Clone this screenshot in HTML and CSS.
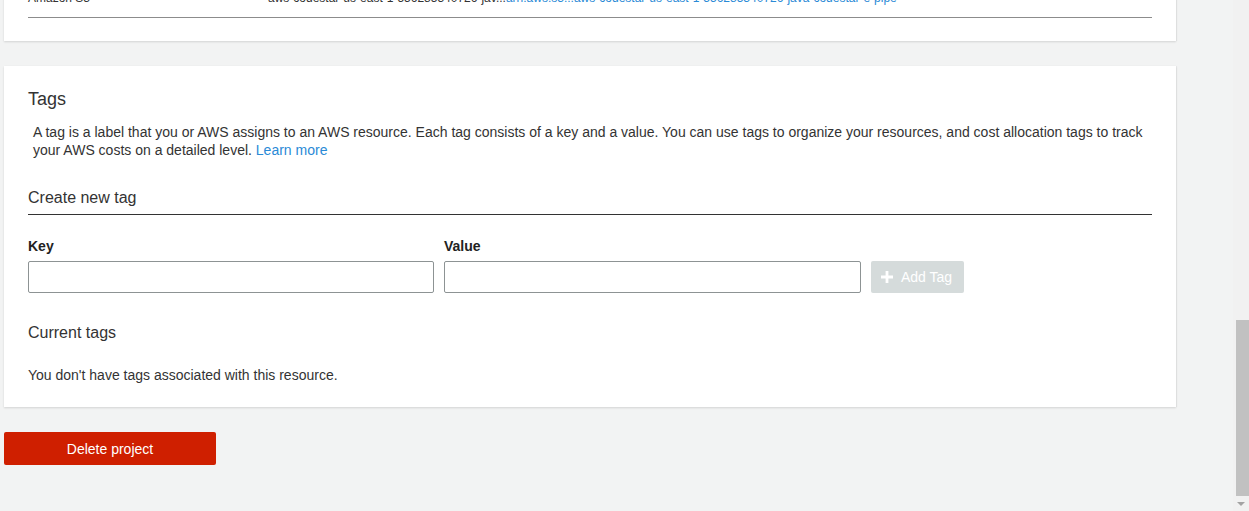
FILE: index.html
```html
<!DOCTYPE html>
<html lang="en">
<head>
<meta charset="utf-8">
<title>Project settings</title>
<link rel="stylesheet" href="styles.css">
</head>
<body>
<div class="page">
  <main class="main">
    <section class="card card-resources">
      <div class="res-row">
        <span class="res-type">Amazon S3</span>
        <span class="res-name">aws-codestar-us-east-1-556285340726-jav...<a class="link" href="#">arn:aws:s3:::aws-codestar-us-east-1-556285340726-java-codestar-e-pipe</a></span>
      </div>
    </section>

    <section class="card card-tags">
      <h2 class="card-title">Tags</h2>
      <p class="desc">A tag is a label that you or AWS assigns to an AWS resource. Each tag consists of a key and a value. You can use tags to organize your resources, and cost allocation tags to track your AWS costs on a detailed level. <a class="link" href="#">Learn more</a></p>
      <h3 class="sub-title sub-rule">Create new tag</h3>
      <div class="tag-form">
        <div class="field field-key">
          <label class="field-label" for="k">Key</label>
          <input class="field-input" id="k" type="text">
        </div>
        <div class="field field-value">
          <label class="field-label" for="v">Value</label>
          <input class="field-input" id="v" type="text">
        </div>
        <button class="btn-add" type="button" disabled>
          <svg class="plus" width="12" height="12" viewBox="0 0 12 12"><path d="M4.6 0h2.8v4.6H12v2.8H7.4V12H4.6V7.4H0V4.6h4.6z" fill="#fff"/></svg>
          <span>Add Tag</span>
        </button>
      </div>
      <h3 class="sub-title sub-current">Current tags</h3>
      <p class="empty">You don't have tags associated with this resource.</p>
    </section>

    <div class="actions">
      <button class="btn-delete" type="button">Delete project</button>
    </div>
  </main>
  <div class="scrollbar">
    <div class="thumb"></div>
    <div class="arrow"></div>
  </div>
</div>
</body>
</html>
```

FILE: styles.css
```css
* { box-sizing: border-box; }
html, body {
  margin: 0;
  padding: 0;
  height: 511px;
  overflow: hidden;
}
body {
  background: #f2f3f3;
  font-family: "Liberation Sans", Arial, sans-serif;
  color: #16191f;
  font-size: 14px;
}
.page {
  display: flex;
  height: 511px;
}
.main {
  width: 1233px;
  padding-left: 4px;
}
.card {
  width: 1172px;
  background: #fff;
  box-shadow: 0 1px 2px 0 rgba(0, 0, 0, 0.13), 1px 0 1px 0 rgba(0, 0, 0, 0.04);
  padding: 0 24px;
}
.card-resources {
  margin-top: -12px;
  padding-bottom: 23px;
}
.res-row {
  display: flex;
  height: 30px;
  line-height: 20px;
  font-size: 12px;
  padding-bottom: 9px;
  border-bottom: 1px solid #8c8c8c;
  color: #333;
}
.res-type { width: 240px; }
.res-name { white-space: nowrap; }
.link {
  color: #2a8ad6;
  text-decoration: none;
}
.card-tags {
  margin-top: 25px;
  padding-top: 21px;
  padding-bottom: 23px;
}
.card-title {
  margin: 0;
  font-size: 18px;
  line-height: 24px;
  font-weight: normal;
  color: #333;
}
.desc {
  margin: 12px 0 0;
  padding-left: 5px;
  line-height: 18px;
  color: #333;
}
.sub-title {
  margin: 0;
  font-size: 16px;
  line-height: 20px;
  font-weight: normal;
  color: #333;
}
.sub-rule {
  margin-top: 29px;
  padding-bottom: 6px;
  border-bottom: 1px solid #333;
}
.tag-form {
  display: flex;
  align-items: flex-end;
  gap: 10px;
  margin-top: 22px;
}
.field {
  display: flex;
  flex-direction: column;
  gap: 6px;
}
.field-key { width: 406px; }
.field-value { width: 417px; }
.field-label {
  font-weight: bold;
  line-height: 18px;
  color: #222;
}
.field-input {
  height: 32px;
  border: 1px solid #8d9394;
  border-radius: 2px;
  padding: 0 8px;
  font: inherit;
  background: #fff;
}
.btn-add {
  display: flex;
  align-items: center;
  gap: 8px;
  width: 93px;
  height: 32px;
  padding: 0 0 0 10px;
  border: 0;
  border-radius: 2px;
  background: #d5dbdb;
  color: #fff;
  font: inherit;
  font-size: 14px;
}
.plus { flex: none; }
.sub-current { margin-top: 30px; }
.empty {
  margin: 23px 0 0;
  line-height: 18px;
  color: #333;
}
.actions { margin-top: 25px; }
.btn-delete {
  width: 212px;
  height: 33px;
  border: 0;
  border-radius: 2px;
  background: #cf1f00;
  color: #fff;
  font: inherit;
  font-size: 14px;
}
.scrollbar {
  width: 16px;
  height: 511px;
  background: #f1f1f1;
  display: flex;
  flex-direction: column;
  align-items: center;
}
.thumb {
  margin-top: 320px;
  width: 13px;
  height: 176px;
  background: #c1c1c1;
  margin-left: 2px;
}
.arrow {
  margin-top: 6px;
  width: 0;
  height: 0;
  border-left: 4px solid transparent;
  border-right: 4px solid transparent;
  border-top: 4px solid #a3a3a3;
}
```
